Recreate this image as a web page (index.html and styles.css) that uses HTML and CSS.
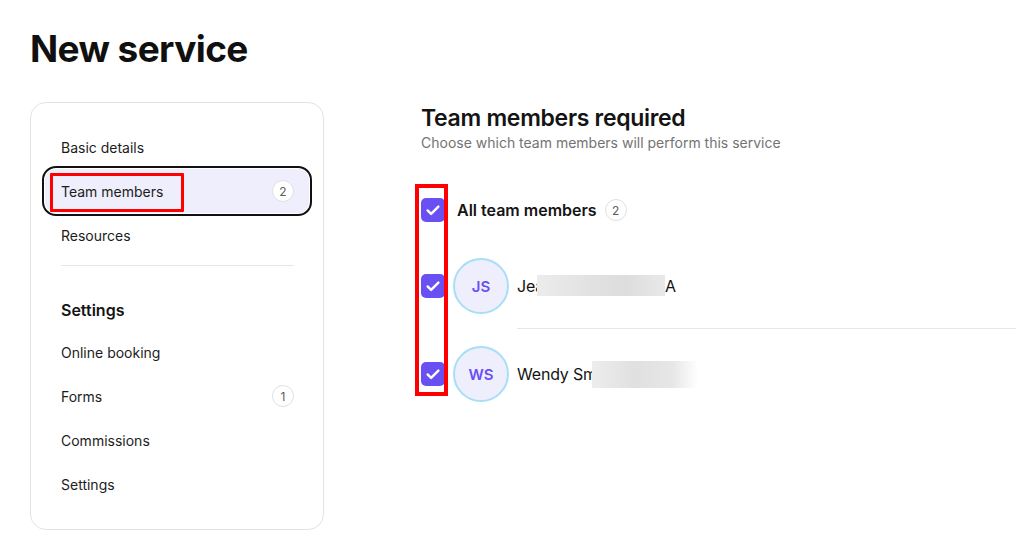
FILE: index.html
```html
<!DOCTYPE html>
<html lang="en">
<head>
<meta charset="utf-8">
<title>New service</title>
<link rel="stylesheet" href="styles.css">
</head>
<body>
<div class="page">
  <h1 class="page-title">New service</h1>
  <div class="layout">
    <nav class="side-card">
      <a class="nav-item">Basic details</a>
      <a class="nav-item is-active">
        <span>Team members</span>
        <span class="badge">2</span>
        <span class="mark mark-nav"></span>
      </a>
      <a class="nav-item">Resources</a>
      <div class="nav-divider"></div>
      <div class="nav-heading">Settings</div>
      <a class="nav-item">Online booking</a>
      <a class="nav-item"><span>Forms</span><span class="badge">1</span></a>
      <a class="nav-item">Commissions</a>
      <a class="nav-item">Settings</a>
    </nav>

    <main class="main">
      <h2 class="section-title">Team members required</h2>
      <p class="section-sub">Choose which team members will perform this service</p>

      <div class="list">
        <span class="mark mark-list"></span>
        <div class="all-row">
          <span class="check"><svg viewBox="0 0 24 24" width="24" height="24"><path d="M6.6 12.4l3.5 3.5 7.3-7.3" fill="none" stroke="#fff" stroke-width="2.4" stroke-linecap="round" stroke-linejoin="round"/></svg></span>
          <span class="all-label">All team members</span>
          <span class="badge">2</span>
        </div>

        <div class="member">
          <div class="cell cell-check">
            <span class="check"><svg viewBox="0 0 24 24" width="24" height="24"><path d="M6.6 12.4l3.5 3.5 7.3-7.3" fill="none" stroke="#fff" stroke-width="2.4" stroke-linecap="round" stroke-linejoin="round"/></svg></span>
          </div>
          <div class="cell cell-avatar"><span class="avatar">JS</span></div>
          <div class="cell cell-name has-line">
            <span class="name">Jea<span class="redact redact-a"></span>A</span>
          </div>
        </div>

        <div class="member">
          <div class="cell cell-check">
            <span class="check"><svg viewBox="0 0 24 24" width="24" height="24"><path d="M6.6 12.4l3.5 3.5 7.3-7.3" fill="none" stroke="#fff" stroke-width="2.4" stroke-linecap="round" stroke-linejoin="round"/></svg></span>
          </div>
          <div class="cell cell-avatar"><span class="avatar">WS</span></div>
          <div class="cell cell-name">
            <span class="name">Wendy Sm<span class="redact redact-b"></span></span>
          </div>
        </div>
      </div>
    </main>
  </div>
</div>
</body>
</html>
```

FILE: styles.css
```css
* { box-sizing: border-box; }

html, body {
  margin: 0;
  padding: 0;
  background: #ffffff;
}

body {
  font-family: "Inter", "Liberation Sans", sans-serif;
  color: #141414;
  overflow: hidden;
}

.page {
  padding: 25px 0 0 30px;
}

.page-title {
  margin: 0;
  font-size: 37px;
  line-height: 48px;
  font-weight: 700;
  letter-spacing: -0.6px;
  color: #101010;
}

.layout {
  display: flex;
  gap: 97px;
  margin-top: 29px;
}

/* Sidebar */
.side-card {
  width: 294px;
  flex: none;
  border: 1px solid #e3e3e3;
  border-radius: 16px;
  padding: 22px 14px 23px;
  display: flex;
  flex-direction: column;
}

.nav-item {
  position: relative;
  height: 44px;
  padding: 0 16px;
  display: flex;
  align-items: center;
  justify-content: space-between;
  font-size: 14px;
  color: #1c1c1c;
  border-radius: 10px;
}

.nav-item.is-active {
  background: #efeefd;
  outline: 2px solid #111;
  outline-offset: 1px;
  border-radius: 11px;
}

.nav-divider {
  height: 1px;
  background: #e6e6e6;
  margin: 8px 15px 24px 16px;
}

.nav-heading {
  height: 40px;
  padding: 0 16px;
  display: flex;
  align-items: center;
  font-size: 16px;
  font-weight: 600;
  color: #141414;
}

.badge {
  width: 22px;
  height: 22px;
  border: 1px solid #e0e0e0;
  border-radius: 50%;
  background: #fff;
  display: inline-flex;
  align-items: center;
  justify-content: center;
  font-size: 12px;
  color: #5c5c5c;
  flex: none;
}

.nav-item .badge {
  margin-right: -1px;
}

/* annotation marks */
.mark {
  position: absolute;
  border: 3px solid #f00;
  pointer-events: none;
}

.mark-nav {
  left: 5px;
  top: 4px;
  width: 134px;
  height: 39px;
  border-radius: 1px;
}

.mark-list {
  left: -6px;
  top: -2px;
  width: 33px;
  height: 212px;
  border-width: 4px;
}

/* Main */
.main {
  flex: 1;
  min-width: 0;
  padding-top: 2px;
}

.section-title {
  margin: 0;
  font-size: 23px;
  line-height: 28px;
  font-weight: 600;
  letter-spacing: -0.3px;
  color: #141414;
}

.section-sub {
  margin: 1px 0 0;
  font-size: 14px;
  line-height: 20px;
  color: #737373;
}

.list {
  position: relative;
  margin-top: 33px;
}

.all-row {
  height: 48px;
  display: flex;
  align-items: center;
  gap: 12px;
}

.all-label {
  font-size: 16px;
  font-weight: 600;
  color: #141414;
  margin-right: -4px;
}

.check {
  width: 24px;
  height: 24px;
  border-radius: 5px;
  background: #6950f3;
  display: inline-flex;
  flex: none;
}

.member {
  display: flex;
}

.cell {
  display: flex;
  align-items: center;
  padding: 24px 0 15px;
}

.member + .member .cell {
  padding-top: 17px;
}

.cell-check {
  width: 32px;
  flex: none;
}

.cell-avatar {
  width: 64px;
  flex: none;
}

.avatar {
  width: 56px;
  height: 56px;
  border-radius: 50%;
  border: 2px solid #a6dff6;
  background: #efeefd;
  display: flex;
  align-items: center;
  justify-content: center;
  font-size: 15px;
  font-weight: 600;
  color: #6950f3;
}

.cell-name {
  flex: 1;
}

.cell-name.has-line {
  border-bottom: 1px solid #e6e6e6;
}

.name {
  font-size: 16px;
  letter-spacing: -0.2px;
  color: #141414;
  display: inline-flex;
  align-items: center;
  white-space: nowrap;
}

.redact {
  display: inline-block;
}

.redact-a {
  width: 128px;
  height: 21px;
  margin-left: -7px;
  background: linear-gradient(90deg, #ececec 0%, #e2e2e2 40%, #dddddd 70%, #e9e9e9 100%);
}

.redact-b {
  width: 106px;
  height: 27px;
  margin-left: -5px;
  background: linear-gradient(90deg, #ededed 0%, #e0e0e0 40%, #e6e6e6 75%, #ffffff 100%);
}
```
